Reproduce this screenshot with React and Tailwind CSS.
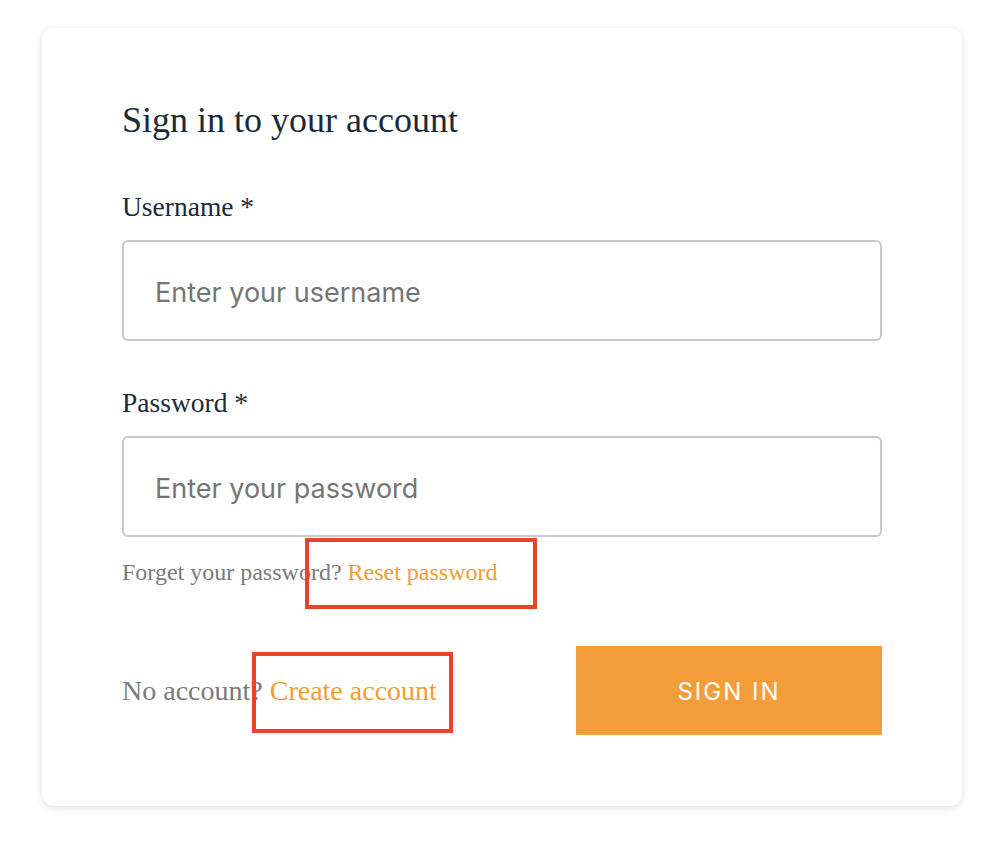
const serif = "font-['Liberation_Serif',serif]";
const sans = "font-['Inter','Noto_Sans',sans-serif]";

function Field({ label, type, placeholder, first }) {
  return (
    <div className={first ? "mt-[55px]" : "mt-[48px]"}>
      <label className="block font-['Liberation_Serif',serif] text-[27.5px] leading-[27px] text-[#1b2a3a]">
        {label}
      </label>
      <input
        type={type}
        placeholder={placeholder}
        className="mt-[20px] block h-[101px] w-full rounded-md border-2 border-[#c8c8c8] pt-[3px] pl-[31px] pr-[32px] font-['Inter','Noto_Sans',sans-serif] text-[27px] text-[#333] outline-none placeholder:text-[#757575]"
      />
    </div>
  );
}

export default function App() {
  return (
    <div className="min-h-[842px] bg-white pt-[28px] pl-[42px]">
      <div className="relative w-[920px] rounded-xl bg-white px-[80px] pt-[74px] pb-[71px] shadow-[0_2px_8px_rgba(0,0,0,0.12)]">
        <h1 className={`${serif} text-[36px] leading-[36px] text-[#1b2a3a]`}>
          Sign in to your account
        </h1>

        <Field first label="Username *" type="text" placeholder="Enter your username" />
        <Field label="Password *" type="password" placeholder="Enter your password" />

        <p className={`${serif} mt-[23px] text-[24px] leading-[24px] text-[#7a7a7a]`}>
          Forget your password? <a className="text-[#f39c34]">Reset password</a>
        </p>

        <div className="mt-[62px] flex items-center justify-between">
          <p className={`${serif} text-[28px] leading-[28px] text-[#7a7a7a]`}>
            No account? <a className="text-[#f39c34]">Create account</a>
          </p>
          <button className={`${sans} h-[89px] w-[306px] bg-[#f39d3a] pt-[2px] text-[24px] tracking-[2px] text-white`}>
            SIGN IN
          </button>
        </div>

        {/* annotation boxes */}
        <div className="absolute left-[263px] top-[510px] h-[71px] w-[232px] border-4 border-[#e8432b]" />
        <div className="absolute left-[210px] top-[624px] h-[81px] w-[201px] border-4 border-[#e8432b]" />
      </div>
    </div>
  );
}
